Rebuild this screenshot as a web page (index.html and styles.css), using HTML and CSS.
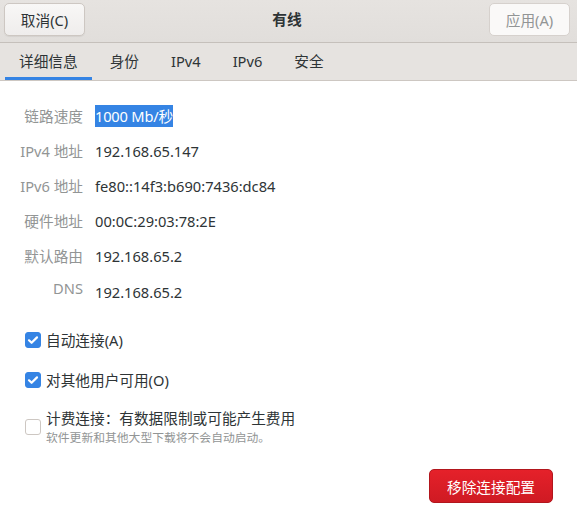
FILE: index.html
```html
<!DOCTYPE html>
<html lang="zh-CN">
<head>
<meta charset="utf-8">
<title>有线</title>
<link rel="stylesheet" href="styles.css">
</head>
<body>
<div class="window">
  <header class="headerbar">
    <button class="btn">取消(C)</button>
    <div class="title">有线</div>
    <button class="btn btn-disabled">应用(A)</button>
  </header>
  <nav class="tabs">
    <div class="tab active">详细信息</div>
    <div class="tab">身份</div>
    <div class="tab">IPv4</div>
    <div class="tab">IPv6</div>
    <div class="tab">安全</div>
  </nav>
  <main class="content">
    <div class="details">
      <div class="label">链路速度</div><div class="value"><span class="selected">1000 Mb/秒</span></div>
      <div class="label">IPv4 地址</div><div class="value">192.168.65.147</div>
      <div class="label">IPv6 地址</div><div class="value">fe80::14f3:b690:7436:dc84</div>
      <div class="label">硬件地址</div><div class="value">00:0C:29:03:78:2E</div>
      <div class="label">默认路由</div><div class="value">192.168.65.2</div>
      <div class="label label-dns">DNS</div><div class="value value-dns">192.168.65.2</div>
    </div>
    <div class="checks">
      <label class="check">
        <span class="box checked"><svg viewBox="0 0 16 16" width="16" height="16"><path d="M4 8.3l2.6 2.5L12 5.4" fill="none" stroke="#fff" stroke-width="2.2" stroke-linecap="round" stroke-linejoin="round"/></svg></span>
        <span class="check-text">自动连接(A)</span>
      </label>
      <label class="check">
        <span class="box checked"><svg viewBox="0 0 16 16" width="16" height="16"><path d="M4 8.3l2.6 2.5L12 5.4" fill="none" stroke="#fff" stroke-width="2.2" stroke-linecap="round" stroke-linejoin="round"/></svg></span>
        <span class="check-text">对其他用户可用(O)</span>
      </label>
      <label class="check">
        <span class="box"></span>
        <span class="check-stack">
          <span class="check-text">计费连接：有数据限制或可能产生费用</span>
          <span class="check-sub">软件更新和其他大型下载将不会自动启动。</span>
        </span>
      </label>
    </div>
    <div class="actions">
      <button class="btn-danger">移除连接配置</button>
    </div>
  </main>
</div>
</body>
</html>
```

FILE: styles.css
```css
html, body {
  margin: 0;
  padding: 0;
  background: #ffffff;
}
body {
  font-family: "Noto Sans", "Noto Sans CJK SC", sans-serif;
  font-size: 14.67px;
  color: #2e3436;
}
.window {
  width: 577px;
  height: 517px;
  overflow: hidden;
  background: #ffffff;
}
.headerbar {
  height: 43px;
  box-sizing: border-box;
  display: flex;
  align-items: flex-start;
  padding: 3px 7px 0 4px;
  background: linear-gradient(to bottom, #e6e3e0, #e1dedb);
  border-bottom: 1px solid #c5c0bb;
}
.btn {
  width: 81px;
  height: 33px;
  box-sizing: border-box;
  border: 1px solid #cdc7c2;
  border-radius: 5px;
  background: linear-gradient(to bottom, #f8f7f6, #efedec);
  box-shadow: 0 1px 1px rgba(0,0,0,0.06);
  font-family: "Noto Sans", "Noto Sans CJK SC", sans-serif;
  font-size: 14.67px;
  color: #2e3436;
  padding: 0;
}
.btn-disabled {
  background: #faf9f8;
  border-color: #d6d1cd;
  color: #929595;
  box-shadow: none;
}
.title {
  flex: 1;
  text-align: center;
  font-weight: bold;
  line-height: 33px;
  color: #2e3436;
}
.tabs {
  height: 38px;
  box-sizing: border-box;
  display: flex;
  gap: 4px;
  padding-left: 5px;
  background: #e6e3e0;
  border-bottom: 1px solid #cdc7c2;
}
.tab {
  padding: 2px 14px 0;
  line-height: 32px;
  border-bottom: 3px solid transparent;
  color: #2e3436;
}
.tab.active {
  border-bottom-color: #3584e4;
}
.content {
  padding-top: 17px;
}
.details {
  display: grid;
  grid-template-columns: 63px 1fr;
  column-gap: 12px;
  padding-left: 20px;
}
.label, .value {
  height: 35px;
  display: flex;
  align-items: center;
}
.label {
  justify-content: flex-end;
  color: #929595;
  white-space: nowrap;
}
.value {
  color: #2e3436;
}
.label-dns {
  padding-bottom: 6px;
  box-sizing: border-box;
}
.value-dns {
  padding-top: 2px;
  box-sizing: border-box;
}
.selected {
  background: #3584e4;
  color: #ffffff;
  line-height: 22px;
  letter-spacing: -0.2px;
}
.checks {
  display: flex;
  flex-direction: column;
  gap: 16px;
  padding: 20px 0 0 25px;
}
.check {
  display: flex;
  align-items: center;
  gap: 5px;
  min-height: 24px;
}
.box {
  width: 16px;
  height: 16px;
  box-sizing: border-box;
  border-radius: 3px;
  border: 1px solid #cdc7c2;
  background: #ffffff;
  display: flex;
  flex: none;
}
.box.checked {
  background: #3584e4;
  border-color: #3584e4;
}
.box.checked svg {
  margin: -1px;
}
.check-text {
  line-height: 24px;
  color: #2e3436;
}
.check-stack {
  display: flex;
  flex-direction: column;
}
.check-stack .check-text {
  line-height: 20px;
}
.check-sub {
  font-size: 11.8px;
  line-height: 18px;
  color: #929595;
}
.actions {
  display: flex;
  justify-content: flex-end;
  padding: 23px 24px 0 0;
}
.btn-danger {
  width: 124px;
  height: 34px;
  border: 1px solid #b2161d;
  border-radius: 5px;
  background: linear-gradient(to bottom, #e5212a, #cf1a23);
  color: #ffffff;
  font-family: "Noto Sans", "Noto Sans CJK SC", sans-serif;
  font-size: 14.67px;
  padding: 0;
}
```
